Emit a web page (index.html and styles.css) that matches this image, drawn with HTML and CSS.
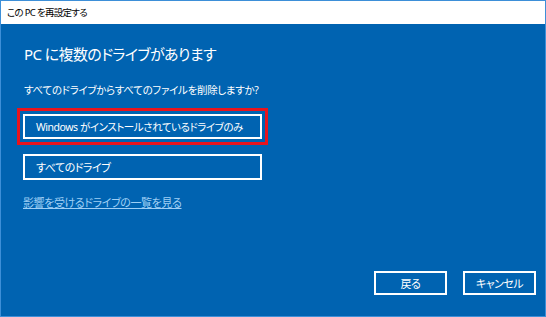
FILE: index.html
```html
<!DOCTYPE html>
<html lang="ja">
<head>
<meta charset="utf-8">
<link rel="stylesheet" href="styles.css">
</head>
<body>
<div class="window">
  <div class="titlebar">この PC を再設定する</div>
  <div class="content">
    <h1 class="heading">PC に複数のドライブがあります</h1>
    <p class="question">すべてのドライブからすべてのファイルを削除しますか?</p>
    <div class="options">
      <div class="highlight">
        <button class="btn option">Windows がインストールされているドライブのみ</button>
      </div>
      <button class="btn option second">すべてのドライブ</button>
    </div>
    <a class="link" href="#">影響を受けるドライブの一覧を見る</a>
    <div class="footer">
      <button class="btn action">戻る</button>
      <button class="btn action">キャンセル</button>
    </div>
  </div>
</div>
</body>
</html>
```
FILE: styles.css
```css
html, body {
  margin: 0;
  padding: 0;
}
body {
  font-family: "Noto Sans", "Noto Sans CJK JP", sans-serif;
  font-feature-settings: "palt";
}
.window {
  width: 546px;
  height: 317px;
  box-sizing: border-box;
  border: 1px solid #3d8fd8;
  display: flex;
  flex-direction: column;
  background: #0063b1;
}
.titlebar {
  height: 23px;
  background: #ffffff;
  color: #000000;
  font-size: 9.5px;
  letter-spacing: -0.7px;
  line-height: 23px;
  padding-left: 6px;
}
.content {
  flex: 1;
  display: flex;
  flex-direction: column;
  padding: 0 9px 21px 22px;
  color: #ffffff;
}
.heading {
  margin: 18px 0 0 1px;
  font-size: 15px;
  letter-spacing: -0.6px;
  font-weight: normal;
  line-height: 24px;
}
.question {
  margin: 16px 0 0 1px;
  font-size: 10.5px;
  letter-spacing: -0.3px;
  line-height: 16px;
}
.options {
  display: flex;
  flex-direction: column;
  margin-top: 10px;
  margin-left: -6px;
}
.highlight {
  align-self: flex-start;
  border: 3px solid #e8141d;
  padding: 3px 3px;
}
.btn {
  font-family: inherit;
  font-feature-settings: "palt";
  background: transparent;
  color: #ffffff;
  border: 2px solid #ffffff;
  margin: 0;
  cursor: pointer;
  white-space: nowrap;
  font-size: 11px;
  letter-spacing: -0.5px;
}
.option {
  width: 239px;
  height: 25px;
  text-align: left;
  padding: 0 0 0 11px;
}
.highlight .option {
  font-size: 10.5px;
  letter-spacing: -0.45px;
}
.second {
  margin-top: 9px;
  margin-left: 6px;
  height: 26px;
}
.link {
  margin-top: 15px;
  font-size: 11px;
  letter-spacing: -0.4px;
  line-height: 16px;
  color: #9fcff5;
  text-decoration: underline;
  align-self: flex-start;
}
.footer {
  margin-top: auto;
  display: flex;
  justify-content: flex-end;
  gap: 16px;
}
.action {
  width: 73px;
  height: 24px;
  text-align: center;
  padding: 0;
}
```
